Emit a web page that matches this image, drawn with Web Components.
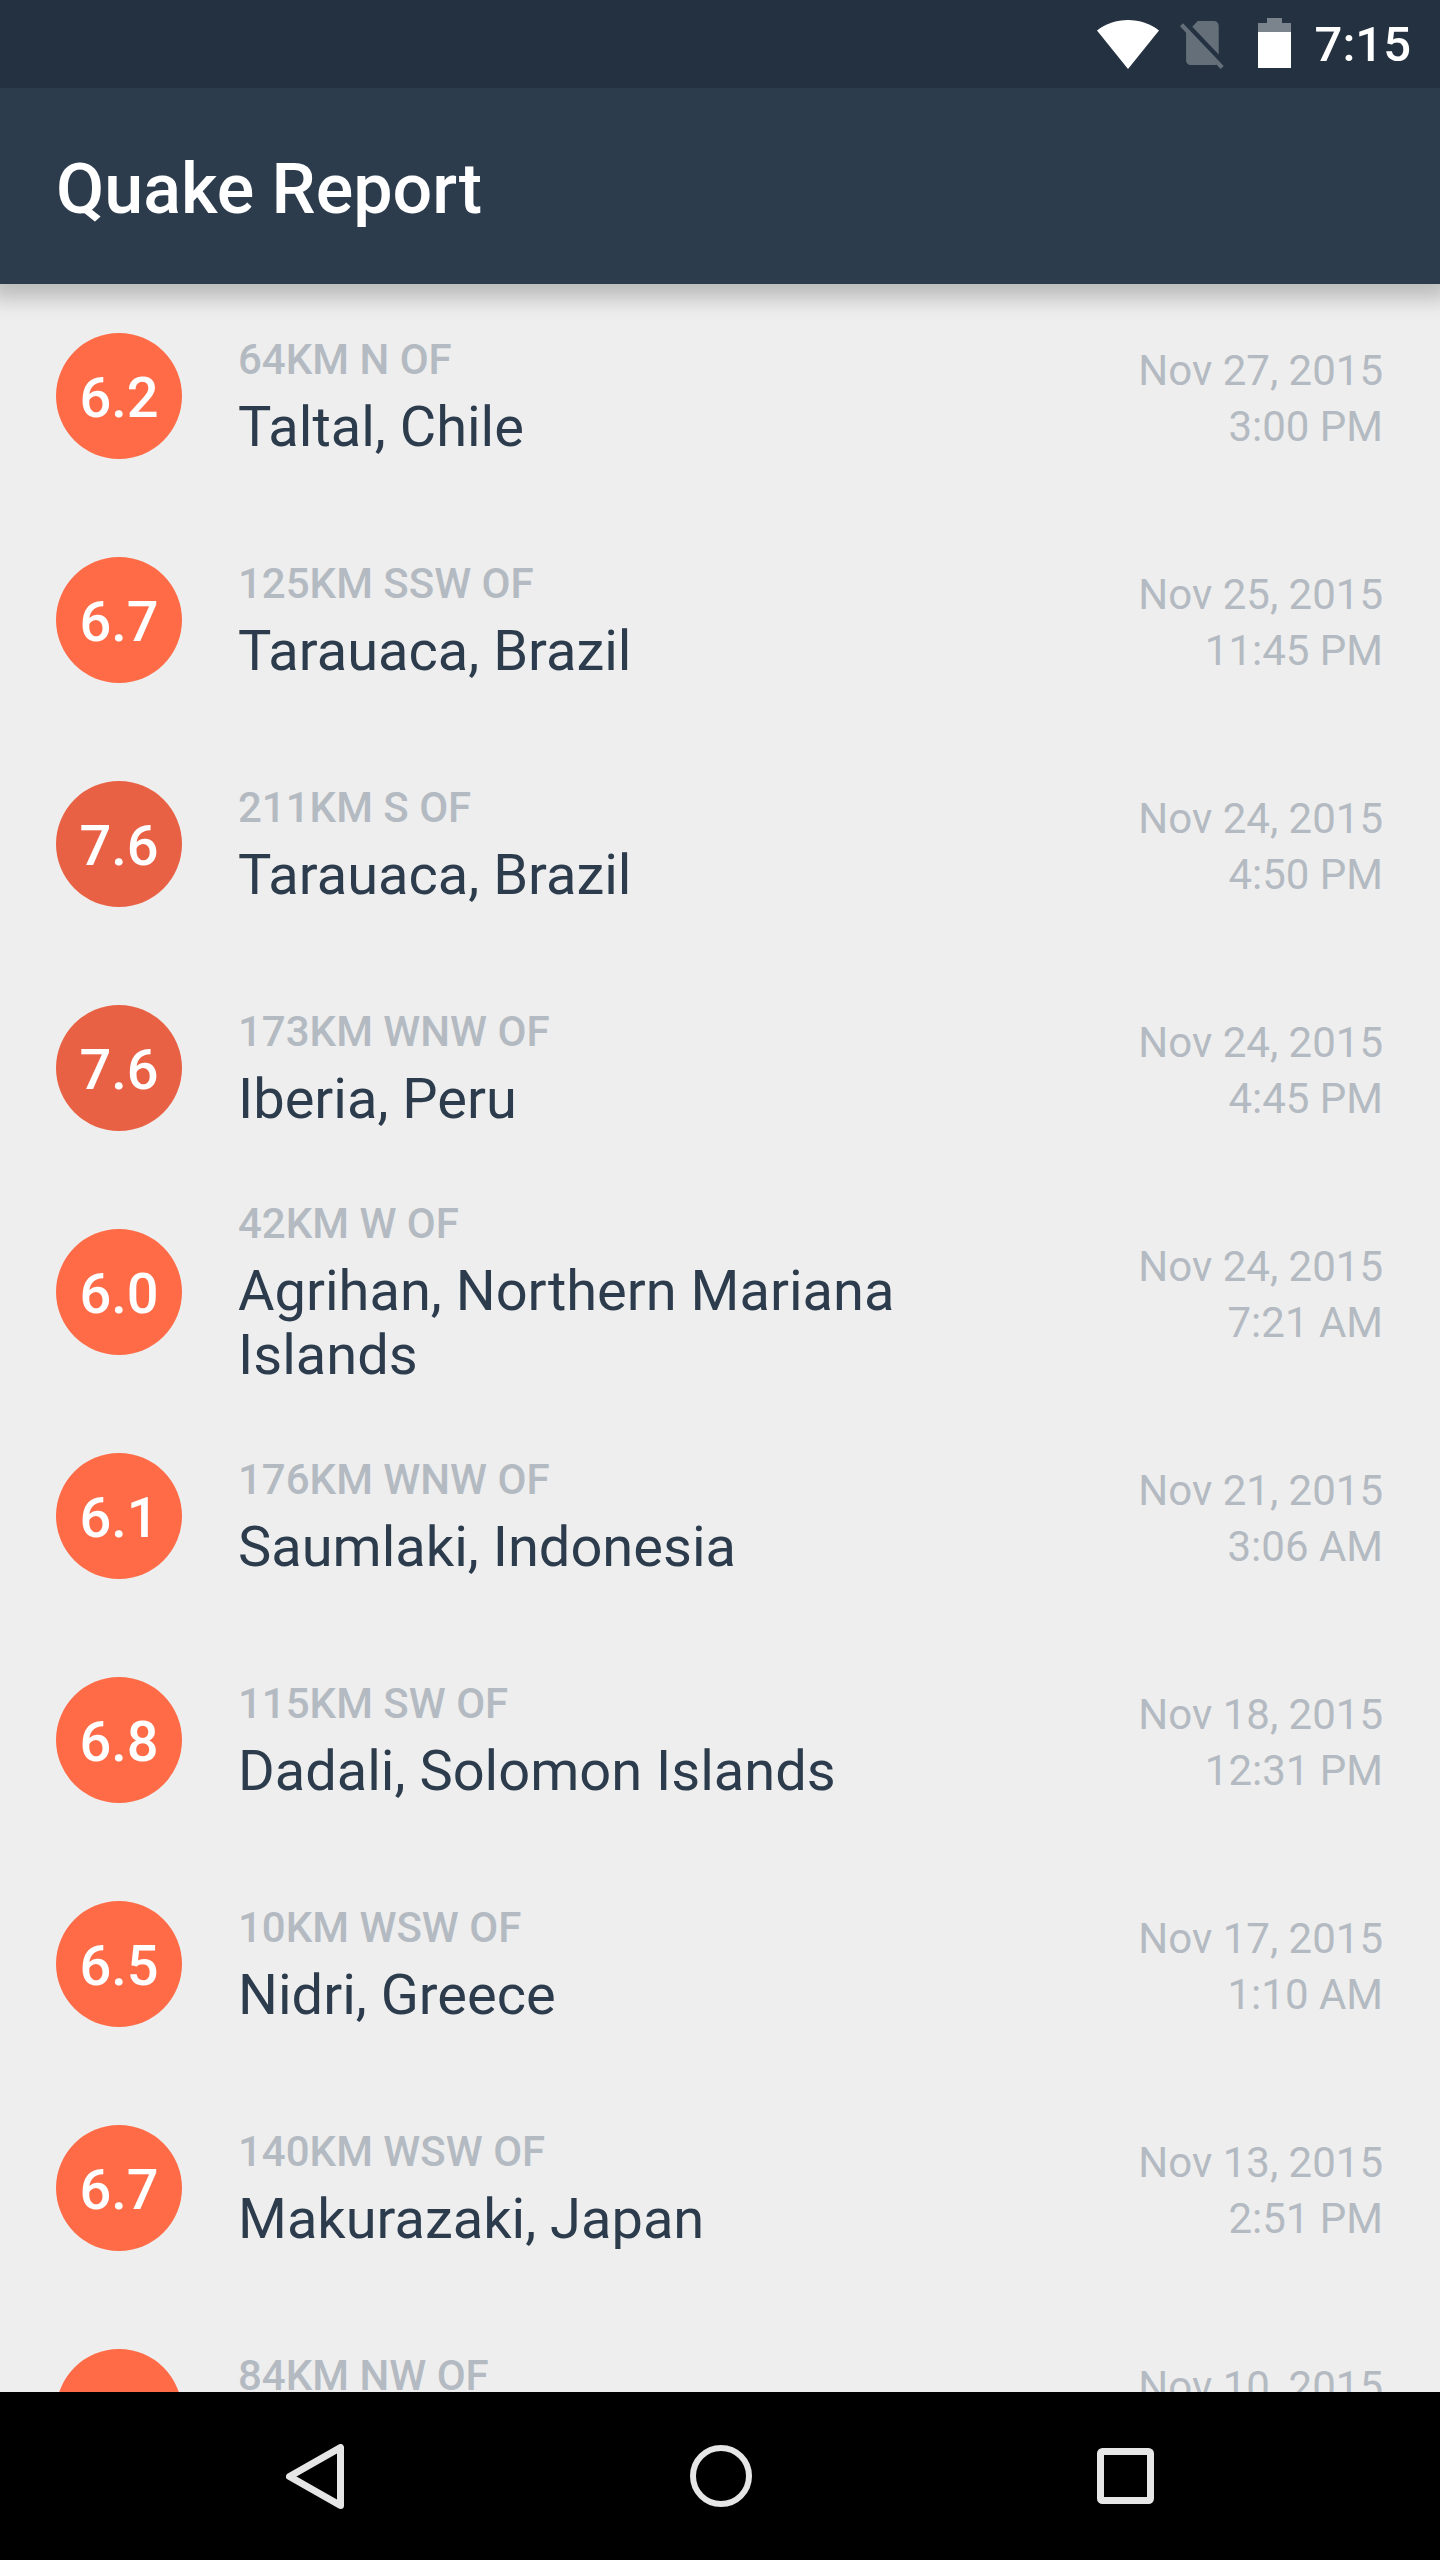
<!DOCTYPE html>
<html>
<head>
<meta charset="utf-8">
<title>Quake Report</title>
<style>
  html, body { margin: 0; padding: 0; background: #000; }
  body { font-family: Roboto, "Liberation Sans", sans-serif; }
</style>
</head>
<body>
<quake-app>
  <status-bar slot="status">7:15</status-bar>
  <app-bar slot="bar">Quake Report</app-bar>
  <quake-item><span slot="magnitude">6.2</span><span slot="offset">64km N of</span><span slot="location">Taltal, Chile</span><span slot="date">Nov 27, 2015</span><span slot="time">3:00 PM</span></quake-item>
  <quake-item><span slot="magnitude">6.7</span><span slot="offset">125km SSW of</span><span slot="location">Tarauaca, Brazil</span><span slot="date">Nov 25, 2015</span><span slot="time">11:45 PM</span></quake-item>
  <quake-item strong><span slot="magnitude">7.6</span><span slot="offset">211km S of</span><span slot="location">Tarauaca, Brazil</span><span slot="date">Nov 24, 2015</span><span slot="time">4:50 PM</span></quake-item>
  <quake-item strong><span slot="magnitude">7.6</span><span slot="offset">173km WNW of</span><span slot="location">Iberia, Peru</span><span slot="date">Nov 24, 2015</span><span slot="time">4:45 PM</span></quake-item>
  <quake-item><span slot="magnitude">6.0</span><span slot="offset">42km W of</span><span slot="location">Agrihan, Northern Mariana Islands</span><span slot="date">Nov 24, 2015</span><span slot="time">7:21 AM</span></quake-item>
  <quake-item><span slot="magnitude">6.1</span><span slot="offset">176km WNW of</span><span slot="location">Saumlaki, Indonesia</span><span slot="date">Nov 21, 2015</span><span slot="time">3:06 AM</span></quake-item>
  <quake-item><span slot="magnitude">6.8</span><span slot="offset">115km SW of</span><span slot="location">Dadali, Solomon Islands</span><span slot="date">Nov 18, 2015</span><span slot="time">12:31 PM</span></quake-item>
  <quake-item><span slot="magnitude">6.5</span><span slot="offset">10km WSW of</span><span slot="location">Nidri, Greece</span><span slot="date">Nov 17, 2015</span><span slot="time">1:10 AM</span></quake-item>
  <quake-item><span slot="magnitude">6.7</span><span slot="offset">140km WSW of</span><span slot="location">Makurazaki, Japan</span><span slot="date">Nov 13, 2015</span><span slot="time">2:51 PM</span></quake-item>
  <quake-item><span slot="magnitude">6.4</span><span slot="offset">84km NW of</span><span slot="location">Kokopo, Papua New Guinea</span><span slot="date">Nov 10, 2015</span><span slot="time">6:02 PM</span></quake-item>
  <nav-bar slot="nav"></nav-bar>
</quake-app>

<script>
const appTemplate = document.createElement('template');
appTemplate.innerHTML = `
  <style>
    :host {
      display: flex;
      flex-direction: column;
      width: 1440px;
      height: 2560px;
      overflow: hidden;
      background: #eeeeee;
    }
    .list {
      flex: 1;
      min-height: 0;
      overflow: hidden;
      display: flex;
      flex-direction: column;
    }
  </style>
  <slot name="status"></slot>
  <slot name="bar"></slot>
  <div class="list"><slot></slot></div>
  <slot name="nav"></slot>
`;

class QuakeApp extends HTMLElement {
  constructor() {
    super();
    this.attachShadow({ mode: 'open' }).appendChild(appTemplate.content.cloneNode(true));
  }
}

const statusTemplate = document.createElement('template');
statusTemplate.innerHTML = `
  <style>
    :host {
      display: flex;
      flex: none;
      position: relative;
      z-index: 2;
      align-items: center;
      justify-content: flex-end;
      height: 88px;
      padding-right: 29px;
      background: #233140;
      color: #fff;
      font-size: 49px;
      font-weight: 500;
    }
    svg { display: block; flex: none; }
    .wifi { margin-right: 21px; }
    .sim { margin: 2px 32px 0 0; }
    .battery { margin: 0 24px 2px 0; }
  </style>
  <svg class="wifi" width="62" height="49" viewBox="0 0 62 49">
    <path fill="#fff" d="M31 49L0 10.500C8.500 3.800 19.300 0 31 0s22.500 3.800 31 10.500z"/>
  </svg>
  <svg class="sim" width="46" height="48" viewBox="2.38 3 19.74 19.62" preserveAspectRatio="none">
    <path fill="#fff" fill-opacity=".3" d="M18.990 5c0-1.100-.890-2-1.990-2h-7L7.660 5.340 19 16.680 18.990 5zM3.650 3.880L2.380 5.150 5 7.770V19c0 1.100.900 2 2 2h10.010c.350 0 .670-.100.960-.260l1.880 1.880 1.270-1.270L3.650 3.880z"/>
  </svg>
  <svg class="battery" width="33" height="50" viewBox="0 0 33 50">
    <path fill="#fff" fill-opacity=".4" d="M9 0h15v5h9v9H0V5h9z"/>
    <rect fill="#fff" y="14" width="33" height="36"/>
  </svg>
  <slot></slot>
`;

class StatusBar extends HTMLElement {
  constructor() {
    super();
    this.attachShadow({ mode: 'open' }).appendChild(statusTemplate.content.cloneNode(true));
  }
}

const barTemplate = document.createElement('template');
barTemplate.innerHTML = `
  <style>
    :host {
      display: flex;
      flex: none;
      box-sizing: border-box;
      align-items: center;
      position: relative;
      z-index: 1;
      height: 196px;
      padding: 5px 0 0 56px;
      background: #2c3c4d;
      color: #fff;
      font-size: 70px;
      font-weight: 500;
      box-shadow: 0 4px 20px 10px rgba(0, 0, 0, .22);
    }
  </style>
  <slot></slot>
`;

class AppBar extends HTMLElement {
  constructor() {
    super();
    this.attachShadow({ mode: 'open' }).appendChild(barTemplate.content.cloneNode(true));
  }
}

const itemTemplate = document.createElement('template');
itemTemplate.innerHTML = `
  <style>
    :host {
      display: flex;
      flex: none;
      align-items: center;
      height: 224px;
      padding: 0 57px 0 56px;
    }
    .magnitude {
      flex: none;
      box-sizing: border-box;
      display: flex;
      align-items: center;
      justify-content: center;
      width: 126px;
      height: 126px;
      padding-top: 4px;
      border-radius: 50%;
      background: #ff6b47;
      color: #fff;
      font-size: 56px;
      font-weight: 500;
      margin-right: 56px;
    }
    :host([strong]) .magnitude { background: #e96145; }
    .place {
      flex: 1;
      min-width: 0;
      padding: 2px 130px 0 0;
      display: flex;
      flex-direction: column;
    }
    .offset {
      font-size: 42px;
      font-weight: 500;
      line-height: 49px;
      margin-bottom: 11px;
      color: #b4bac1;
      text-transform: uppercase;
    }
    .location {
      font-size: 56px;
      line-height: 64px;
      color: #2c3c4d;
    }
    .when {
      flex: none;
      display: flex;
      flex-direction: column;
      align-items: flex-end;
      padding-top: 6px;
      font-size: 42px;
      line-height: 56px;
      color: #b4bac1;
    }
  </style>
  <div class="magnitude"><slot name="magnitude"></slot></div>
  <div class="place">
    <div class="offset"><slot name="offset"></slot></div>
    <div class="location"><slot name="location"></slot></div>
  </div>
  <div class="when">
    <slot name="date"></slot>
    <slot name="time"></slot>
  </div>
`;

class QuakeItem extends HTMLElement {
  constructor() {
    super();
    this.attachShadow({ mode: 'open' }).appendChild(itemTemplate.content.cloneNode(true));
  }
}

const navTemplate = document.createElement('template');
navTemplate.innerHTML = `
  <style>
    :host {
      display: flex;
      flex: none;
      position: relative;
      z-index: 1;
      align-items: center;
      height: 168px;
      padding: 0 286px;
      background: #000;
      justify-content: space-between;
    }
    svg { display: block; flex: none; }
  </style>
  <svg width="58" height="65" viewBox="0 0 58 65">
    <path fill="none" stroke="#e6e6e6" stroke-width="7" stroke-linejoin="round" d="M54.500 3.500v58L3.500 32.500z"/>
  </svg>
  <svg width="62" height="62" viewBox="0 0 62 62">
    <circle fill="none" stroke="#e6e6e6" stroke-width="6" cx="31" cy="31" r="28"/>
  </svg>
  <svg width="57" height="56" viewBox="0 0 57 56">
    <rect fill="none" stroke="#e6e6e6" stroke-width="7" x="3.500" y="3.500" width="50" height="49" rx="2"/>
  </svg>
`;

class NavBar extends HTMLElement {
  constructor() {
    super();
    this.attachShadow({ mode: 'open' }).appendChild(navTemplate.content.cloneNode(true));
  }
}

customElements.define('quake-app', QuakeApp);
customElements.define('status-bar', StatusBar);
customElements.define('app-bar', AppBar);
customElements.define('quake-item', QuakeItem);
customElements.define('nav-bar', NavBar);
</script>
</body>
</html>
